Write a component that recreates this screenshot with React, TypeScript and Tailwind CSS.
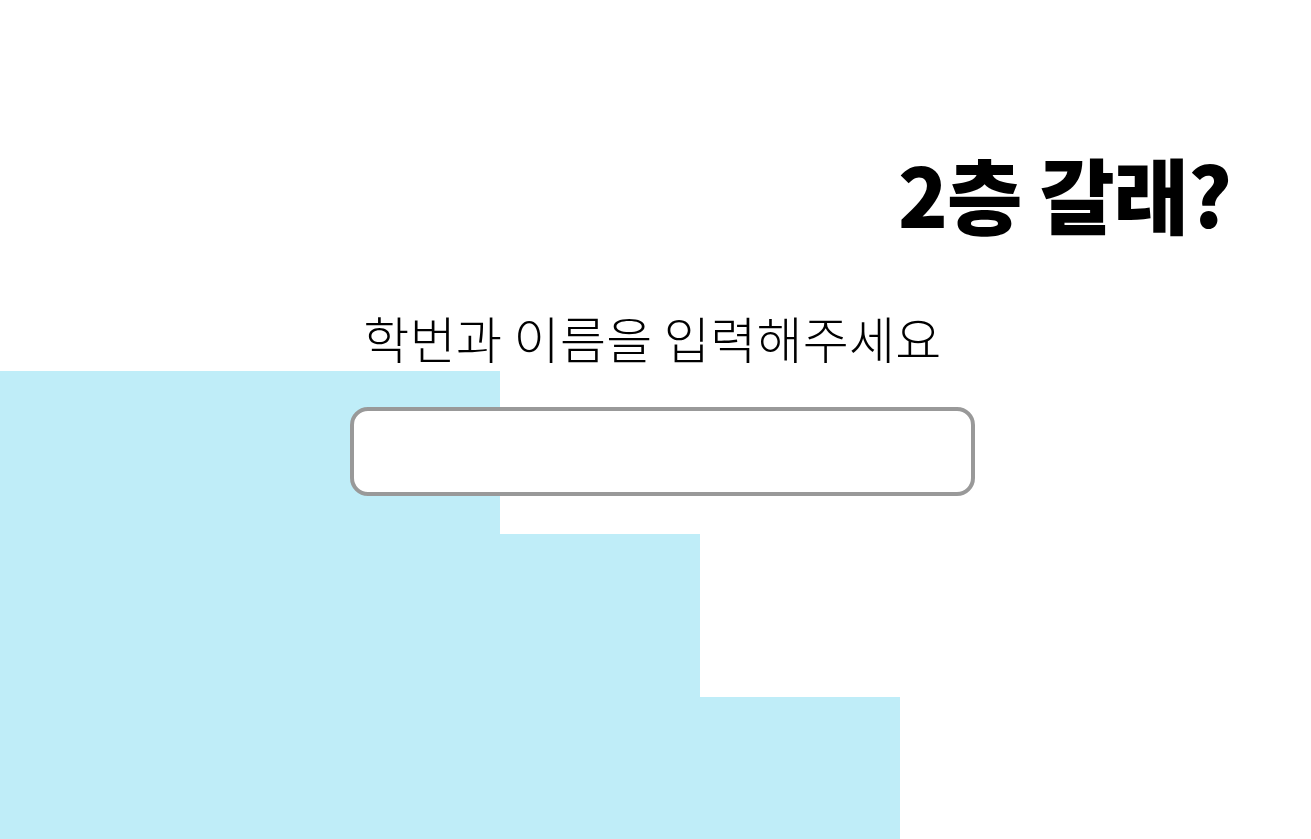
import { useState } from "react";

export default function App() {
  const [studentInfo, setStudentInfo] = useState<string>("");

  return (
    <div className="relative w-full h-[839px] overflow-hidden bg-white font-['Noto_Sans_CJK_KR',sans-serif]">
      {/* stairs in the background */}
      <div className="absolute left-0 bottom-0 flex items-end">
        <div className="w-[500px] h-[468px] bg-[#bfedf8]" />
        <div className="w-[200px] h-[305px] bg-[#bfedf8]" />
        <div className="w-[200px] h-[142px] bg-[#bfedf8]" />
      </div>

      <div className="relative flex flex-col">
        <div className="flex justify-end pr-[80px] pt-[138px]">
          <h1 className="text-[82px] leading-[110px] font-black text-black tracking-[-1px]">
            2층 갈래?
          </h1>
        </div>

        <div className="flex flex-col items-center mt-[59px]">
          <p className="mr-[6px] text-[50px] leading-[60px] font-light text-black tracking-[0.3px]">
            학번과 이름을 입력해주세요
          </p>
          <input
            value={studentInfo}
            onChange={(e) => setStudentInfo(e.target.value)}
            className="mt-[40px] ml-[14px] w-[625px] h-[89px] rounded-[18px] border-4 border-[#999999] bg-white px-5 text-3xl outline-none"
          />
        </div>
      </div>
    </div>
  );
}
